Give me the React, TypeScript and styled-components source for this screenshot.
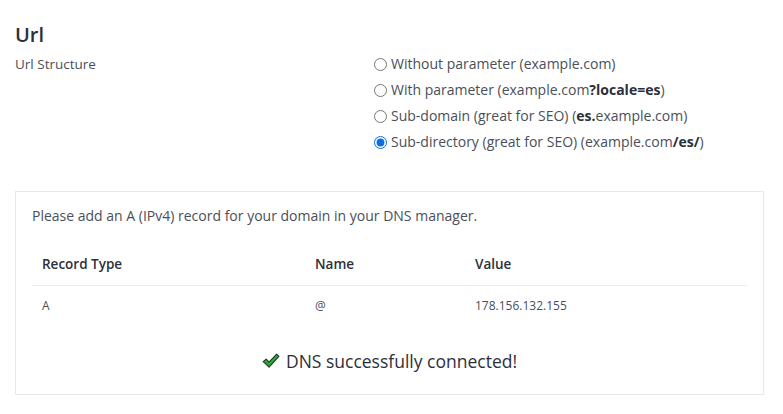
import styled, { createGlobalStyle } from 'styled-components';

const GlobalStyle = createGlobalStyle`
  body {
    margin: 0;
    background: #ffffff;
    font-family: "Open Sans", "Liberation Sans", sans-serif;
    color: #4a4f5a;
  }
`;

const options = [
    { key: 'none', label: <>Without parameter (example.com)</> },
    { key: 'param', label: <>With parameter (example.com<b>?locale=es</b>)</> },
    { key: 'sub', label: <>Sub-domain (great for SEO) (<b>es.</b>example.com)</> },
    { key: 'dir', label: <>Sub-directory (great for SEO) (example.com<b>/es/</b>)</> },
];

const records = [
    { type: 'A', name: '@', value: '178.156.132.155' },
];

const App = () => {
    return (
        <Page>
            <GlobalStyle />
            <Title>Url</Title>
            <FieldRow>
                <FieldLabel>Url Structure</FieldLabel>
                <RadioList>
                    {options.map((o) => (
                        <RadioLabel key={o.key}>
                            <Radio type="radio" name="url" defaultChecked={o.key === 'dir'} />
                            <span>{o.label}</span>
                        </RadioLabel>
                    ))}
                </RadioList>
            </FieldRow>

            <Card>
                <Intro>Please add an A (IPv4) record for your domain in your DNS manager.</Intro>
                <Table>
                    <colgroup>
                        <col style={{ width: 273 }} />
                        <col style={{ width: 160 }} />
                        <col />
                    </colgroup>
                    <thead>
                        <tr>
                            <Th>Record Type</Th>
                            <Th>Name</Th>
                            <Th>Value</Th>
                        </tr>
                    </thead>
                    <tbody>
                        {records.map((r, i) => (
                            <tr key={i}>
                                <Td>{r.type}</Td>
                                <Td>{r.name}</Td>
                                <Td>{r.value}</Td>
                            </tr>
                        ))}
                    </tbody>
                </Table>
                <Success>
                    <svg width="18" height="16" viewBox="0 0 18 16">
                        <path
                            d="M1.2 8.6 L4.2 6.1 L7 9.2 L14.6 1.2 L16.9 3.3 L7.1 14.2 Z"
                            fill="#2fa83f"
                            stroke="#1c3a1f"
                            strokeWidth="1.1"
                            strokeLinejoin="round"
                        />
                    </svg>
                    DNS successfully connected!
                </Success>
            </Card>
        </Page>
    );
};

export default App;

const Page = styled.div`
  padding: 22px 19px 18px 15px;
`;

const Title = styled.h2`
  margin: 0 0 6px;
  font-size: 20px;
  font-weight: 600;
  color: #2c303b;
  line-height: 26px;
`;

const FieldRow = styled.div`
  display: grid;
  grid-template-columns: 359px 1fr;
  margin-bottom: 39px;
`;

const FieldLabel = styled.div`
  font-size: 13.5px;
  line-height: 20px;
`;

const RadioList = styled.div`
  display: flex;
  flex-direction: column;
  gap: 6px;
`;

const RadioLabel = styled.label`
  display: flex;
  align-items: center;
  gap: 4px;
  font-size: 14px;
  line-height: 20px;
  color: #4a4f5a;
  b {
    font-weight: 700;
    color: #2c303b;
  }
`;

const Radio = styled.input`
  margin: 0;
  width: 13px;
  height: 13px;
  accent-color: #0b6fe0;
`;

const Card = styled.section`
  border: 1px solid #e8e8e8;
  padding: 15px 16px 21px;
`;

const Intro = styled.p`
  margin: 0 0 20px;
  font-size: 14px;
  font-weight: 400;
  line-height: 18px;
  color: #4a4f5a;
`;

const Table = styled.table`
  width: 100%;
  table-layout: fixed;
  border-collapse: collapse;
  margin-bottom: 23px;
`;

const Th = styled.th`
  text-align: left;
  font-weight: 600;
  font-size: 13.5px;
  color: #2c303b;
  padding: 10px 10px 12px;
  border-bottom: 1px solid #ececec;
`;

const Td = styled.td`
  font-size: 12px;
  font-weight: 400;
  color: #4a4f5a;
  padding: 11px 10px 12px;
`;

const Success = styled.div`
  display: flex;
  align-items: center;
  justify-content: center;
  gap: 6px;
  font-size: 17.5px;
  font-weight: 500;
  color: #2c303b;
`;
